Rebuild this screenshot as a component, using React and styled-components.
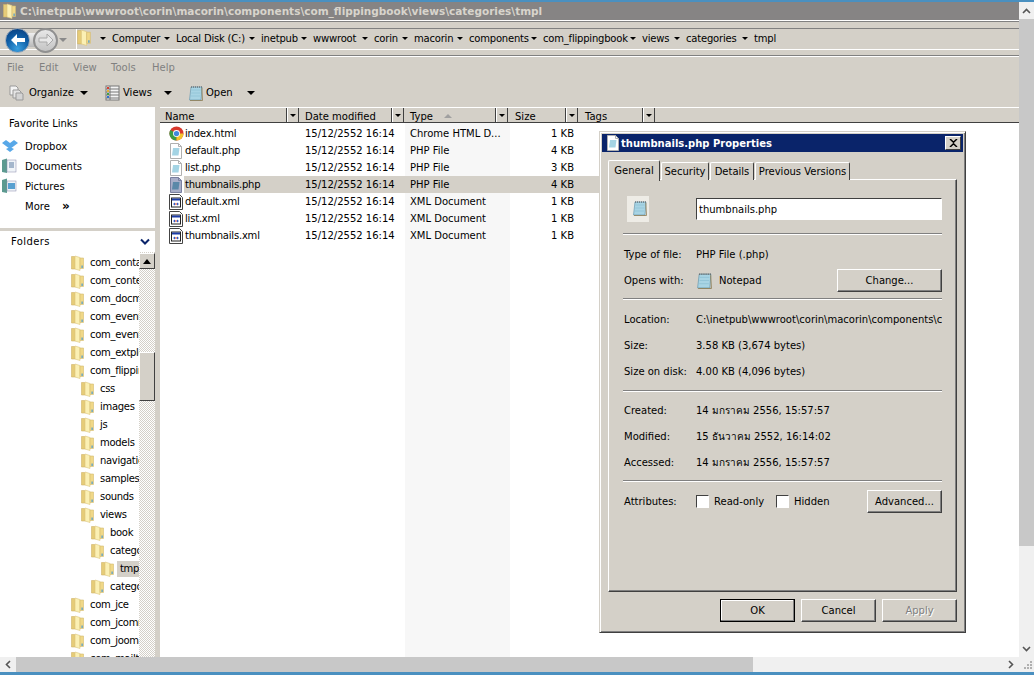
import styled, { createGlobalStyle } from "styled-components";

const GlobalStyle = createGlobalStyle`
  html, body {
    margin: 0;
    padding: 0;
    background: #fff;
  }
  * {
    box-sizing: border-box;
  }
`;

const crumbs = [
  ["Computer", 64],
  ["Local Disk (C:)", 85],
  ["inetpub", 52],
  ["wwwroot", 61],
  ["corin", 40],
  ["macorin", 55],
  ["components", 74],
  ["com_flippingbook", 99],
  ["views", 44],
  ["categories", 68],
  ["tmpl", 30],
];

const files = [
  { name: "index.html", type: "Chrome HTML D...", size: "1 KB", icon: "chrome" },
  { name: "default.php", type: "PHP File", size: "4 KB", icon: "doc" },
  { name: "list.php", type: "PHP File", size: "3 KB", icon: "doc" },
  { name: "thumbnails.php", type: "PHP File", size: "4 KB", icon: "doc", selected: true },
  { name: "default.xml", type: "XML Document", size: "1 KB", icon: "xml" },
  { name: "list.xml", type: "XML Document", size: "1 KB", icon: "xml" },
  { name: "thumbnails.xml", type: "XML Document", size: "1 KB", icon: "xml" },
];

const folders = [
  ["com_contact", 0],
  ["com_content", 0],
  ["com_docman", 0],
  ["com_events", 0],
  ["com_events2", 0],
  ["com_extplorer", 0],
  ["com_flippingbook", 0],
  ["css", 1],
  ["images", 1],
  ["js", 1],
  ["models", 1],
  ["navigation", 1],
  ["samples", 1],
  ["sounds", 1],
  ["views", 1],
  ["book", 2],
  ["categories", 2],
  ["tmpl", 3, true],
  ["category", 2],
  ["com_jce", 0],
  ["com_jcomments", 0],
  ["com_joomap", 0],
  ["com_mailto", 0],
];

const columns = [
  { label: "Name", width: 127, pad: 5 },
  { label: "Date modified", width: 93, pad: 6 },
  { label: "Type", width: 92, pad: 6, sorted: true },
  { label: "Size", width: 58, pad: 7 },
  { label: "Tags", width: 65, pad: 7 },
];

const FolderIcon = ({ size = 13 }) => (
  <svg width={size} height={size + 3} viewBox="0 0 13 16" style={{ flex: "none" }}>
    <path d="M.5 1.500h3l1 1V14H.5z" fill="#e6cc78" stroke="#d0b468" strokeWidth="0.6" />
    <path d="M4 1 9 2.500V15.500L4 14z" fill="#fbf0b4" stroke="#dcc47a" strokeWidth="0.6" />
    <path d="M9 3h3.500v10.500H9z" fill="#f0d888" stroke="#d4bc70" strokeWidth="0.6" />
    <path d="M10.500 10.500h1.200V13h-1.200z" fill="#4a9ad0" />
  </svg>
);

const NoteIcon = ({ size = 16 }) => (
  <svg width={size} height={size} viewBox="0 0 16 16" style={{ flex: "none" }}>
    <path d="M3 2h11l-1 13H1.500z" fill="#a8d4e4" stroke="#6a9ab0" strokeWidth="0.7" />
    <path d="M3 2h11" stroke="#555" strokeWidth="1" strokeDasharray="1 1" />
    <path d="M3.500 5h9M3.300 8h9M3 11h9" stroke="#8cc0d4" strokeWidth="0.7" />
    <path d="M13.800 3 14.500 15.500H2" fill="none" stroke="#8a7a50" strokeWidth="0.8" />
  </svg>
);

const DocIcon = ({ dark }) => (
  <svg width="14" height="16" viewBox="0 0 14 16">
    <path d="M1.500.5h8l3 3v12h-11z" fill={dark ? "#a8aec8" : "#fff"} stroke={dark ? "#7a80a0" : "#b0b0b0"} />
    <path d="M4 5h6.500l-1 7.500H3z" fill={dark ? "#5a88a8" : "#a4d4e4"} />
    <path d="M9.500.5v3h3" fill="none" stroke={dark ? "#7a80a0" : "#b0b0b0"} />
  </svg>
);

const XmlIcon = () => (
  <svg width="14" height="16" viewBox="0 0 14 16">
    <path d="M.5.5h10l3 3v12H.5z" fill="#fff" stroke="#444" />
    <rect x="2.500" y="4" width="9" height="9" fill="#fff" stroke="#222" />
    <rect x="3" y="4.500" width="8" height="2" fill="#1c3ca8" />
    <path d="M4 10l2-1.500V11.500zM10 10 8 8.500V11.500z" fill="#2858c8" />
    <rect x="6.500" y="9" width="1" height="2" fill="#c83020" />
  </svg>
);

const ChromeIcon = () => (
  <svg width="15" height="15" viewBox="0 0 16 16">
    <circle cx="8" cy="8" r="7.500" fill="#d8382c" />
    <path d="M8 8 1.500 4.200A7.500 7.500 0 0 0 8 15.500z" fill="#3c9c44" />
    <path d="M8 8h7.500A7.500 7.500 0 0 1 8 15.500z" fill="#f4c42c" />
    <circle cx="8" cy="8" r="3.700" fill="#fff" />
    <circle cx="8" cy="8" r="2.800" fill="#4088dc" />
  </svg>
);

const BackArrow = () => (
  <svg width="16" height="14" viewBox="0 0 16 14">
    <path d="M1 7l6-6v4h8v4H7v4z" fill="#fff" />
  </svg>
);

const ForwardArrow = () => (
  <svg width="16" height="14" viewBox="0 0 16 14">
    <path d="M15 7 9 1v4H1v4h8v4z" fill="#e8e8e8" stroke="#a8a8a8" />
  </svg>
);

const fileIcon = (file) => {
  if (file.icon === "chrome") return <ChromeIcon />;
  if (file.icon === "xml") return <XmlIcon />;
  return <DocIcon dark={file.selected} />;
};

const App = () => {
  return (
    <Screen>
      <GlobalStyle />
      <TopLine />
      <Body>
        <ExplorerWindow>
          <TitleBar>
            <TitleIcon>
              <FolderIcon size={13} />
            </TitleIcon>
            <TitleText>
              C:\inetpub\wwwroot\corin\macorin\components\com_flippingbook\views\categories\tmpl
            </TitleText>
          </TitleBar>
          <TitleEdge />
          <AddressStrip />
          <AddressRow>
            <NavPill>
              <BackButton>
                <BackArrow />
              </BackButton>
              <ForwardButton>
                <ForwardArrow />
              </ForwardButton>
              <NavDrop />
            </NavPill>
            <AddressBox>
              <AddressFolder>
                <FolderIcon size={14} />
              </AddressFolder>
              <CrumbList>
                {crumbs.map(([label, width]) => (
                  <Crumb key={label} $width={width}>
                    <TinyArrow />
                    <span>{label}</span>
                  </Crumb>
                ))}
              </CrumbList>
            </AddressBox>
          </AddressRow>
          <AddressEdge />
          <MenuBar>
            <MenuItem $width={32}>File</MenuItem>
            <MenuItem $width={34}>Edit</MenuItem>
            <MenuItem $width={38}>View</MenuItem>
            <MenuItem $width={41}>Tools</MenuItem>
            <MenuItem $width={40}>Help</MenuItem>
          </MenuBar>
          <Toolbar>
            <ToolButton $width={96}>
              <ToolIcon $width={20}>
                <svg width="15" height="16" viewBox="0 0 15 16">
                  <path d="M1 1h6l2 2v7H1z" fill="#f4f4f4" stroke="#999" />
                  <path d="M4 5h6l2 2v6H4z" fill="#e4e4e4" stroke="#999" />
                  <path d="M7 8h6l1 1v6H7z" fill="#d4d4d4" stroke="#999" />
                </svg>
              </ToolIcon>
              <ToolLabel $width={51}>Organize</ToolLabel>
              <TinyArrow $wide />
            </ToolButton>
            <ToolButton $width={83}>
              <ToolIcon $width={18}>
                <svg width="15" height="16" viewBox="0 0 15 16">
                  <rect x="1" y="1" width="13" height="14" fill="#f4f4f4" stroke="#777" />
                  <path d="M5 1v14M1 4h13M1 7h13M1 10h13M1 13h13" stroke="#777" />
                  <path d="M2 2h2v2H2z" fill="#d84030" />
                  <path d="M2 5h2v2H2z" fill="#e8b030" />
                  <path d="M2 8h2v2H2z" fill="#40a040" />
                  <path d="M2 11h2v2H2z" fill="#3070d0" />
                </svg>
              </ToolIcon>
              <ToolLabel $width={41}>Views</ToolLabel>
              <TinyArrow $wide />
            </ToolButton>
            <ToolButton $width={80}>
              <ToolIcon $width={18}>
                <NoteIcon size={16} />
              </ToolIcon>
              <ToolLabel $width={41}>Open</ToolLabel>
              <TinyArrow $wide />
            </ToolButton>
          </Toolbar>
          <Panes>
            <LeftPane>
              <Favorites>
                <FavTitle>Favorite Links</FavTitle>
                <FavRow>
                  <FavIcon>
                    <svg width="16" height="14" viewBox="0 0 16 14">
                      <path d="M4 1 8 4 4 7 0 4zM12 1l4 3-4 3-4-3zM4 7l4 3 4-3-4-3zM4 10l4 3 4-3-4-2z" fill="#58a8e8" />
                    </svg>
                  </FavIcon>
                  Dropbox
                </FavRow>
                <FavRow>
                  <FavIcon>
                    <svg width="15" height="16" viewBox="0 0 15 16">
                      <path d="M0 2l5-1.500V15l-5-1z" fill="#5c9a90" />
                      <rect x="5" y="2" width="9" height="12" fill="#f0f4f8" stroke="#88a" strokeWidth="0.5" />
                      <path d="M7 5h5M7 7h5M7 9h5" stroke="#5878a0" />
                    </svg>
                  </FavIcon>
                  Documents
                </FavRow>
                <FavRow>
                  <FavIcon>
                    <svg width="15" height="16" viewBox="0 0 15 16">
                      <path d="M0 2l5-1.500V15l-5-1z" fill="#5c9a90" />
                      <rect x="5" y="3" width="9" height="10" fill="#f0f4f8" stroke="#88a" strokeWidth="0.5" />
                      <rect x="6" y="5" width="7" height="6" fill="#58a0d0" />
                    </svg>
                  </FavIcon>
                  Pictures
                </FavRow>
                <FavRow>
                  <FavIcon />
                  <MoreLabel>More</MoreLabel>
                  <MoreChevrons>»</MoreChevrons>
                </FavRow>
              </Favorites>
              <PaneDivider />
              <FoldersHeader>
                Folders
                <svg width="10" height="8" viewBox="0 0 10 8">
                  <path d="M1 1.500 5 5.500 9 1.500" fill="none" stroke="#0a246a" strokeWidth="2" />
                </svg>
              </FoldersHeader>
              <TreeArea>
                <Tree>
                  {folders.map(([label, level, selected], index) => (
                    <TreeRow key={index} $level={level}>
                      <FolderIcon size={13} />
                      <TreeLabel $selected={selected}>{label}</TreeLabel>
                    </TreeRow>
                  ))}
                </Tree>
                <TreeScroll>
                  <TreeScrollButton>
                    <svg width="8" height="5" viewBox="0 0 8 5">
                      <path d="M4 0 8 5H0z" fill="#000" />
                    </svg>
                  </TreeScrollButton>
                  <TreeScrollThumb />
                </TreeScroll>
              </TreeArea>
            </LeftPane>
            <RightPane>
              <HeaderRow>
                {columns.map((col) => (
                  <HeaderCell key={col.label} $width={col.width}>
                    <HeaderLabel $pad={col.pad}>
                      {col.label}
                      {col.sorted && <SortMark />}
                    </HeaderLabel>
                    <HeaderDrop>
                      <TinyArrow />
                    </HeaderDrop>
                  </HeaderCell>
                ))}
              </HeaderRow>
              <FileArea>
                {files.map((file) => (
                  <FileRow key={file.name}>
                    <FileIcon>{fileIcon(file)}</FileIcon>
                    <FileCells $selected={file.selected}>
                      <NameCell>{file.name}</NameCell>
                      <DateCell>15/12/2552 16:14</DateCell>
                      <TypeCell>{file.type}</TypeCell>
                      <SizeCell>{file.size}</SizeCell>
                    </FileCells>
                  </FileRow>
                ))}
              </FileArea>
            </RightPane>
          </Panes>
        </ExplorerWindow>
        <VScroll>
          <ScrollEnd>
            <svg width="9" height="6" viewBox="0 0 9 6">
              <path d="M1 5 4.500 1.500 8 5" fill="none" stroke="#555" strokeWidth="1.600" />
            </svg>
          </ScrollEnd>
          <VThumb />
          <VTrack />
          <ScrollEnd>
            <svg width="9" height="6" viewBox="0 0 9 6">
              <path d="M1 1 4.500 4.500 8 1" fill="none" stroke="#555" strokeWidth="1.600" />
            </svg>
          </ScrollEnd>
        </VScroll>
      </Body>
      <HScroll>
        <HEnd>
          <svg width="6" height="9" viewBox="0 0 6 9">
            <path d="M5 1 1.500 4.500 5 8" fill="none" stroke="#555" strokeWidth="1.600" />
          </svg>
        </HEnd>
        <HThumb />
        <HTrack />
        <HEnd>
          <svg width="6" height="9" viewBox="0 0 6 9">
            <path d="M1 1 4.500 4.500 1 8" fill="none" stroke="#555" strokeWidth="1.600" />
          </svg>
        </HEnd>
        <ResizeGrip>
          <svg width="9" height="9" viewBox="0 0 9 9">
            <path d="M6 1h2v2H6zM3 4h2v2H3zM6 4h2v2H6zM0 7h2v2H0zM3 7h2v2H3zM6 7h2v2H6z" fill="#b0b0b0" />
          </svg>
        </ResizeGrip>
      </HScroll>
      <BottomLine />

      <Dialog>
        <DialogTitle>
          <DialogTitleIcon>
            <DocIcon />
          </DialogTitleIcon>
          <DialogTitleText>thumbnails.php Properties</DialogTitleText>
          <CloseButton>
            <svg width="9" height="8" viewBox="0 0 9 8">
              <path d="M1 0 4.500 3.200 8 0M1 8 4.500 4.800 8 8" fill="none" stroke="#000" strokeWidth="1.500" />
            </svg>
          </CloseButton>
        </DialogTitle>
        <DialogBody>
          <TabStrip>
            <Tab $active $width={52}>General</Tab>
            <Tab $width={48}>Security</Tab>
            <Tab $width={44}>Details</Tab>
            <Tab $width={95}>Previous Versions</Tab>
          </TabStrip>
          <TabPanel>
            <NameRow>
              <BigIcon>
                <NoteIcon size={16} />
              </BigIcon>
              <NameInput>thumbnails.php</NameInput>
            </NameRow>
            <Separator $top={11} />
            <InfoRow $height={26} $top={6}>
              <InfoLabel>Type of file:</InfoLabel>
              <InfoValue>PHP File (.php)</InfoValue>
            </InfoRow>
            <InfoRow $height={26}>
              <InfoLabel>Opens with:</InfoLabel>
              <InfoValue>
                <NoteIcon size={17} />
                <NoteName>Notepad</NoteName>
              </InfoValue>
              <PushButton $width={105}>Change...</PushButton>
            </InfoRow>
            <Separator $top={5} />
            <InfoRow $height={26} $top={6}>
              <InfoLabel>Location:</InfoLabel>
              <InfoValue>C:\inetpub\wwwroot\corin\macorin\components\com_flippingbook</InfoValue>
            </InfoRow>
            <InfoRow $height={26}>
              <InfoLabel>Size:</InfoLabel>
              <InfoValue>3.58 KB (3,674 bytes)</InfoValue>
            </InfoRow>
            <InfoRow $height={26}>
              <InfoLabel>Size on disk:</InfoLabel>
              <InfoValue>4.00 KB (4,096 bytes)</InfoValue>
            </InfoRow>
            <Separator $top={6} />
            <InfoRow $height={26} $top={5}>
              <InfoLabel>Created:</InfoLabel>
              <InfoValue>14 มกราคม 2556, 15:57:57</InfoValue>
            </InfoRow>
            <InfoRow $height={26}>
              <InfoLabel>Modified:</InfoLabel>
              <InfoValue>15 ธันวาคม 2552, 16:14:02</InfoValue>
            </InfoRow>
            <InfoRow $height={26}>
              <InfoLabel>Accessed:</InfoLabel>
              <InfoValue>14 มกราคม 2556, 15:57:57</InfoValue>
            </InfoRow>
            <Separator $top={5} />
            <InfoRow $height={23} $top={8}>
              <InfoLabel>Attributes:</InfoLabel>
              <AttrGroup>
                <CheckBox />
                <CheckLabel $width={67}>Read-only</CheckLabel>
                <CheckBox />
                <CheckLabel $width={78}>Hidden</CheckLabel>
                <PushButton $width={75}>Advanced...</PushButton>
              </AttrGroup>
            </InfoRow>
          </TabPanel>
          <DialogButtons>
            <PushButton $width={75} $default>OK</PushButton>
            <PushButton $width={75}>Cancel</PushButton>
            <PushButton $width={75} $disabled>Apply</PushButton>
          </DialogButtons>
        </DialogBody>
      </Dialog>
    </Screen>
  );
};

export default App;

const Screen = styled.div`
  position: relative;
  display: flex;
  flex-direction: column;
  width: 1034px;
  height: 675px;
  overflow: hidden;
  font-family: "DejaVu Sans", "Noto Sans", sans-serif;
  font-size: 10px;
  color: #000;
  background: #fff;
`;

const TopLine = styled.div`
  height: 2px;
  flex: none;
  background: #4a90c0;
`;

const Body = styled.div`
  display: flex;
  height: 655px;
  flex: none;
`;

const ExplorerWindow = styled.div`
  display: flex;
  flex-direction: column;
  width: 1019px;
  flex: none;
  background: #d4d0c8;
`;

const TitleBar = styled.div`
  display: flex;
  align-items: center;
  height: 18px;
  flex: none;
  background: #868484;
`;

const TitleIcon = styled.span`
  display: flex;
  width: 20px;
  padding-left: 3px;
`;

const TitleText = styled.span`
  font-size: 10.500px;
  font-weight: 700;
  color: #d8d4cc;
  white-space: nowrap;
`;

const TitleEdge = styled.div`
  height: 2px;
  flex: none;
  border-top: 1px solid #fff;
  border-bottom: 1px solid #808080;
`;

const AddressStrip = styled.div`
  height: 7px;
  flex: none;
  border-bottom: 1px solid #808080;
`;

const AddressRow = styled.div`
  display: flex;
  height: 21px;
  flex: none;
  border-bottom: 1px solid #fff;
`;

const NavPill = styled.div`
  display: flex;
  align-items: center;
  width: 76px;
  height: 26px;
  margin-top: -2px;
  padding-left: 5px;
  flex: none;
  z-index: 1;
  background: linear-gradient(#efefef, #b8b8b8) no-repeat 17px 6px / 30px 14px;
`;

const BackButton = styled.div`
  display: flex;
  align-items: center;
  justify-content: center;
  width: 25px;
  height: 25px;
  flex: none;
  border-radius: 50%;
  border: 1px solid #9aa8b8;
  background: radial-gradient(circle at 50% 85%, #3aa0e0, #1060a8 50%, #0a3a78);
`;

const ForwardButton = styled.div`
  display: flex;
  align-items: center;
  justify-content: center;
  width: 25px;
  height: 25px;
  flex: none;
  margin-left: 3px;
  border-radius: 50%;
  border: 2px solid #909090;
  background: linear-gradient(#e8e8e8, #c4c4c4);
`;

const NavDrop = styled.div`
  width: 0;
  height: 0;
  margin-left: 1px;
  border-left: 4px solid transparent;
  border-right: 4px solid transparent;
  border-top: 4px solid #8a8a8a;
`;

const AddressBox = styled.div`
  display: flex;
  align-items: flex-start;
  flex: 1;
  border-left: 1px solid #fff;
`;

const AddressFolder = styled.span`
  display: flex;
  width: 23px;
  flex: none;
`;

const CrumbList = styled.div`
  display: flex;
  height: 18px;
  align-items: center;
  letter-spacing: -0.200px;
`;

const Crumb = styled.div`
  display: flex;
  align-items: center;
  gap: 6px;
  width: ${(props) => props.$width}px;
  flex: none;
  white-space: nowrap;
`;

const TinyArrow = styled.span`
  display: inline-block;
  width: 0;
  height: 0;
  flex: none;
  border-left: ${(props) => (props.$wide ? 4 : 3)}px solid transparent;
  border-right: ${(props) => (props.$wide ? 4 : 3)}px solid transparent;
  border-top: ${(props) => (props.$wide ? 4 : 3)}px solid #000;
`;

const AddressEdge = styled.div`
  height: 7px;
  flex: none;
  border-bottom: 1px solid #fff;
  box-shadow: inset 0 -1px 0 #808080;
`;

const MenuBar = styled.div`
  display: flex;
  align-items: center;
  height: 21px;
  flex: none;
  padding-left: 7px;
  color: #808080;
`;

const MenuItem = styled.span`
  width: ${(props) => props.$width}px;
`;

const Toolbar = styled.div`
  display: flex;
  align-items: center;
  height: 29px;
  flex: none;
  padding-left: 9px;
`;

const ToolButton = styled.div`
  display: flex;
  align-items: center;
  width: ${(props) => props.$width}px;
`;

const ToolIcon = styled.span`
  display: flex;
  width: ${(props) => props.$width}px;
`;

const ToolLabel = styled.span`
  width: ${(props) => props.$width}px;
`;

const Panes = styled.div`
  display: flex;
  flex: 1;
  min-height: 0;
  overflow: hidden;
`;

const LeftPane = styled.div`
  display: flex;
  flex-direction: column;
  width: 155px;
  flex: none;
  margin-right: 5px;
  background: #fff;
`;

const Favorites = styled.div`
  display: flex;
  flex-direction: column;
  height: 121px;
  flex: none;
  padding-top: 9px;
`;

const FavTitle = styled.div`
  height: 20px;
  line-height: 16px;
  padding-left: 9px;
`;

const FavRow = styled.div`
  display: flex;
  align-items: center;
  height: 20px;
  padding-left: 2px;
`;

const FavIcon = styled.span`
  display: flex;
  width: 23px;
  flex: none;
`;

const MoreLabel = styled.span`
  width: 37px;
`;

const MoreChevrons = styled.span`
  font-size: 12px;
  font-weight: 700;
`;

const PaneDivider = styled.div`
  height: 3px;
  flex: none;
  background: #d4d0c8;
`;

const FoldersHeader = styled.div`
  display: flex;
  align-items: center;
  justify-content: space-between;
  height: 21px;
  flex: none;
  padding: 0 5px 0 11px;
  letter-spacing: 0.400px;
`;

const TreeArea = styled.div`
  display: flex;
  flex: 1;
  min-height: 0;
  overflow: hidden;
`;

const Tree = styled.div`
  display: flex;
  flex-direction: column;
  width: 139px;
  flex: none;
  overflow: hidden;
  padding-top: 2px;
  letter-spacing: -0.300px;
`;

const TreeRow = styled.div`
  display: flex;
  align-items: center;
  flex: none;
  height: 18px;
  padding-left: ${(props) => 71 + props.$level * 10}px;
  white-space: nowrap;
`;

const TreeLabel = styled.span`
  margin-left: 3px;
  padding: 1px 3px;
  line-height: 14px;
  background: ${(props) => (props.$selected ? "#d4d0c8" : "transparent")};
`;

const TreeScroll = styled.div`
  display: flex;
  flex-direction: column;
  width: 16px;
  flex: none;
  background: repeating-conic-gradient(#d4d0c8 0 25%, #fff 0 50%) 0 0 / 2px 2px;
`;

const TreeScrollButton = styled.div`
  display: flex;
  align-items: center;
  justify-content: center;
  height: 16px;
  margin-top: 1px;
  background: #d4d0c8;
  border: 1px solid;
  border-color: #fff #404040 #404040 #fff;
`;

const TreeScrollThumb = styled.div`
  height: 49px;
  margin-top: 83px;
  background: #d4d0c8;
  border: 1px solid;
  border-color: #fff #404040 #404040 #fff;
`;

const RightPane = styled.div`
  display: flex;
  flex-direction: column;
  flex: 1;
  min-width: 0;
  background: #fff;
`;

const HeaderRow = styled.div`
  display: flex;
  height: 16px;
  flex: none;
  background: #d4d0c8;
  border-top: 1px solid #fff;
  border-bottom: 1px solid #404040;
`;

const HeaderCell = styled.div`
  display: flex;
  width: ${(props) => props.$width + 12}px;
  flex: none;
`;

const HeaderLabel = styled.span`
  display: flex;
  align-items: center;
  flex: 1;
  padding: 2px 0 0 ${(props) => props.$pad}px;
  border-right: 1px solid #404040;
`;

const HeaderDrop = styled.span`
  display: flex;
  align-items: center;
  justify-content: center;
  width: 12px;
  flex: none;
  border-right: 1px solid #404040;
  border-left: 1px solid #fff;
`;

const SortMark = styled.span`
  width: 0;
  height: 0;
  margin-left: 11px;
  border-left: 4px solid transparent;
  border-right: 4px solid transparent;
  border-bottom: 4px solid #a0a0a0;
`;

const FileArea = styled.div`
  flex: 1;
  padding-top: 2px;
  background: linear-gradient(to right, #fff 245px, #f7f7f7 245px, #f7f7f7 350px, #fff 350px);
`;

const FileRow = styled.div`
  display: flex;
  height: 17px;
  padding-left: 9px;
`;

const FileIcon = styled.span`
  display: flex;
  align-items: center;
  width: 15px;
  flex: none;
`;

const FileCells = styled.div`
  display: flex;
  align-items: center;
  width: 416px;
  padding-left: 1px;
  white-space: nowrap;
  background: ${(props) => (props.$selected ? "#d4d0c8" : "transparent")};
`;

const NameCell = styled.span`
  width: 120px;
  letter-spacing: -0.200px;
`;

const DateCell = styled.span`
  width: 105px;
`;

const TypeCell = styled.span`
  width: 95px;
`;

const SizeCell = styled.span`
  width: 69px;
  text-align: right;
`;

const VScroll = styled.div`
  display: flex;
  flex-direction: column;
  width: 15px;
  flex: none;
  background: #f0f0f0;
`;

const ScrollEnd = styled.div`
  display: flex;
  align-items: center;
  justify-content: center;
  height: 17px;
  flex: none;
  background: #f0f0f0;
`;

const VThumb = styled.div`
  height: 527px;
  flex: none;
  background: #c8c8c8;
`;

const VTrack = styled.div`
  flex: 1;
`;

const HScroll = styled.div`
  display: flex;
  height: 15px;
  flex: none;
  background: #f0f0f0;
`;

const HEnd = styled.div`
  display: flex;
  align-items: center;
  justify-content: center;
  width: 16px;
  flex: none;
`;

const ResizeGrip = styled.div`
  display: flex;
  align-items: center;
  justify-content: flex-end;
  width: 15px;
  flex: none;
  padding-right: 1px;
`;

const HThumb = styled.div`
  width: 737px;
  flex: none;
  background: #c8c8c8;
`;

const HTrack = styled.div`
  flex: 1;
`;

const BottomLine = styled.div`
  flex: 1;
  background: #4a90c0;
`;

const Dialog = styled.div`
  position: absolute;
  left: 599px;
  top: 131px;
  display: flex;
  flex-direction: column;
  width: 367px;
  height: 502px;
  padding: 2px;
  background: #d4d0c8;
  border: 1px solid;
  border-color: #d4d0c8 #404040 #404040 #d4d0c8;
  box-shadow: inset 1px 1px 0 #fff, inset -1px -1px 0 #808080;
`;

const DialogTitle = styled.div`
  display: flex;
  align-items: center;
  height: 18px;
  flex: none;
  padding: 0 2px 0 4px;
  background: #0a246a;
`;

const DialogTitleIcon = styled.span`
  display: flex;
  width: 15px;
`;

const DialogTitleText = styled.span`
  flex: 1;
  font-size: 10px;
  font-weight: 700;
  color: #fff;
`;

const CloseButton = styled.div`
  display: flex;
  align-items: center;
  justify-content: center;
  width: 16px;
  height: 14px;
  background: #d4d0c8;
  border: 1px solid;
  border-color: #fff #404040 #404040 #fff;
`;

const DialogBody = styled.div`
  display: flex;
  flex-direction: column;
  flex: 1;
  padding: 8px 6px 0;
`;

const TabStrip = styled.div`
  display: flex;
  align-items: flex-end;
  height: 20px;
  flex: none;
  gap: 1px;
  margin-bottom: -1px;
  z-index: 1;
`;

const Tab = styled.div`
  display: flex;
  align-items: center;
  justify-content: center;
  width: ${(props) => props.$width}px;
  height: ${(props) => (props.$active ? 21 : 18)}px;
  flex: none;
  background: #d4d0c8;
  border: 1px solid;
  border-bottom: none;
  border-radius: 2px 2px 0 0;
  border-color: #fff #404040 #d4d0c8 #fff;
  ${(props) => props.$active && "margin-bottom: -1px; padding-bottom: 2px;"}
`;

const TabPanel = styled.div`
  height: 413px;
  flex: none;
  padding: 16px 14px 0 14px;
  border: 1px solid;
  border-color: #fff #404040 #404040 #fff;
  box-shadow: inset -1px -1px 0 #808080;
`;

const NameRow = styled.div`
  display: flex;
  align-items: center;
  height: 26px;
`;

const BigIcon = styled.span`
  display: flex;
  justify-content: flex-end;
  width: 22px;
  height: 26px;
  flex: none;
  padding: 4px 1px 0 0;
  margin-left: 4px;
  margin-right: 47px;
  background: #eeece6;
`;

const NameInput = styled.div`
  display: flex;
  align-items: center;
  width: 246px;
  height: 22px;
  padding: 1px 0 0 2px;
  background: #fff;
  border: 1px solid;
  border-color: #404040 #fff #fff #404040;
`;

const Separator = styled.div`
  height: 2px;
  margin-top: ${(props) => props.$top}px;
  background: #808080;
  border-bottom: 1px solid #fff;
`;

const InfoRow = styled.div`
  display: flex;
  align-items: center;
  height: ${(props) => props.$height}px;
  margin-top: ${(props) => props.$top || 0}px;
`;

const InfoLabel = styled.span`
  width: 73px;
  flex: none;
  padding-left: 1px;
`;

const InfoValue = styled.span`
  display: flex;
  align-items: center;
  flex: 1;
  min-width: 0;
  overflow: hidden;
  white-space: nowrap;
`;

const NoteName = styled.span`
  margin-left: 6px;
`;

const PushButton = styled.div`
  display: flex;
  align-items: center;
  justify-content: center;
  width: ${(props) => props.$width}px;
  height: 23px;
  flex: none;
  background: #d4d0c8;
  border: 1px solid;
  border-color: ${(props) => (props.$default ? "#000" : "#fff #404040 #404040 #fff")};
  box-shadow: ${(props) =>
    props.$default ? "inset -1px -1px 0 #808080, inset 1px 1px 0 #fff" : "inset -1px -1px 0 #808080"};
  color: ${(props) => (props.$disabled ? "#808080" : "#000")};
  text-shadow: ${(props) => (props.$disabled ? "1px 1px 0 #fff" : "none")};
`;

const AttrGroup = styled.div`
  display: flex;
  align-items: center;
  flex: 1;
`;

const CheckBox = styled.span`
  width: 13px;
  height: 13px;
  flex: none;
  background: #fff;
  border: 1px solid;
  border-color: #404040 #fff #fff #404040;
`;

const CheckLabel = styled.span`
  width: ${(props) => props.$width}px;
  flex: none;
  padding-left: 5px;
`;

const DialogButtons = styled.div`
  display: flex;
  justify-content: flex-end;
  gap: 6px;
  margin-top: 7px;
`;
